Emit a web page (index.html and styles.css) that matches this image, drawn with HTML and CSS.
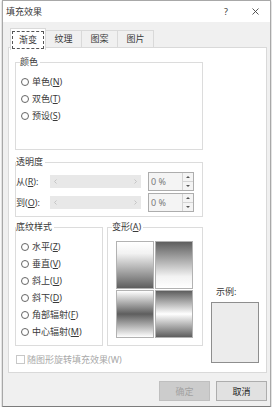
FILE: index.html
```html
<!DOCTYPE html>
<html lang="zh-CN">
<head>
    <meta charset="UTF-8">
    <meta name="viewport" content="width=device-width, initial-scale=1.0">
    <title>填充效果</title>
    <link rel="stylesheet" href="styles.css">
</head>
<body>
    <div class="dialog">
        <div class="titlebar">
            <span class="title">填充效果</span>
            <span class="title-help">?</span>
            <svg class="title-close" width="7" height="7" viewBox="0 0 7 7">
                <path d="M0.5 0.5L6.5 6.5M6.5 0.5L0.5 6.5" stroke="#444" stroke-width="0.9" fill="none"/>
            </svg>
        </div>

        <div class="dialog-body">
            <div class="tabs">
                <div class="tab active"><span class="tab-focus">渐变</span></div>
                <div class="tab">纹理</div>
                <div class="tab">图案</div>
                <div class="tab">图片</div>
            </div>

            <div class="panel">
                <div class="panel-left">
                    <fieldset class="group group-color">
                        <legend>颜色</legend>
                        <label class="radio"><span class="radio-dot"></span><span>单色(<u>N</u>)</span></label>
                        <label class="radio"><span class="radio-dot"></span><span>双色(<u>T</u>)</span></label>
                        <label class="radio"><span class="radio-dot"></span><span>预设(<u>S</u>)</span></label>
                    </fieldset>

                    <fieldset class="group group-alpha">
                        <legend>透明度</legend>
                        <div class="alpha-row">
                            <span class="alpha-label">从(<u>R</u>):</span>
                            <div class="slider">
                                <svg width="3" height="5" viewBox="0 0 3 5"><path d="M2.5 0.5L0.5 2.5L2.5 4.5" stroke="#c4c4c4" fill="none"/></svg>
                                <svg width="3" height="5" viewBox="0 0 3 5"><path d="M0.5 0.5L2.5 2.5L0.5 4.5" stroke="#c4c4c4" fill="none"/></svg>
                            </div>
                            <div class="spin">
                                <span class="spin-value">0 %</span>
                                <div class="spin-btns"><span class="spin-up"></span><span class="spin-down"></span></div>
                            </div>
                        </div>
                        <div class="alpha-row">
                            <span class="alpha-label">到(<u>O</u>):</span>
                            <div class="slider">
                                <svg width="3" height="5" viewBox="0 0 3 5"><path d="M2.5 0.5L0.5 2.5L2.5 4.5" stroke="#c4c4c4" fill="none"/></svg>
                                <svg width="3" height="5" viewBox="0 0 3 5"><path d="M0.5 0.5L2.5 2.5L0.5 4.5" stroke="#c4c4c4" fill="none"/></svg>
                            </div>
                            <div class="spin">
                                <span class="spin-value">0 %</span>
                                <div class="spin-btns"><span class="spin-up"></span><span class="spin-down"></span></div>
                            </div>
                        </div>
                    </fieldset>

                    <div class="group-pair">
                        <fieldset class="group group-style">
                            <legend>底纹样式</legend>
                            <label class="radio"><span class="radio-dot"></span><span>水平(<u>Z</u>)</span></label>
                            <label class="radio"><span class="radio-dot"></span><span>垂直(<u>V</u>)</span></label>
                            <label class="radio"><span class="radio-dot"></span><span>斜上(<u>U</u>)</span></label>
                            <label class="radio"><span class="radio-dot"></span><span>斜下(<u>D</u>)</span></label>
                            <label class="radio"><span class="radio-dot"></span><span>角部辐射(<u>F</u>)</span></label>
                            <label class="radio"><span class="radio-dot"></span><span>中心辐射(<u>M</u>)</span></label>
                        </fieldset>

                        <fieldset class="group group-variant">
                            <legend>变形(<u>A</u>)</legend>
                            <div class="swatches">
                                <span class="swatch swatch-down"></span>
                                <span class="swatch swatch-up"></span>
                                <span class="swatch swatch-mid-dark"></span>
                                <span class="swatch swatch-mid-light"></span>
                            </div>
                        </fieldset>
                    </div>

                    <label class="check"><span class="check-box"></span><span>随图形旋转填充效果(W)</span></label>
                </div>

                <div class="panel-right">
                    <div class="sample-label">示例:</div>
                    <div class="sample-box"></div>
                </div>
            </div>

            <div class="buttons">
                <button class="btn btn-disabled">确定</button>
                <button class="btn">取消</button>
            </div>
        </div>
    </div>
</body>
</html>
```

FILE: styles.css
```css
* {
    margin: 0;
    padding: 0;
    box-sizing: border-box;
}

body {
    font-family: "Noto Sans", "Noto Sans CJK SC", sans-serif;
    font-size: 9px;
    color: #3a3a3a;
    background: #fff;
}

u {
    text-decoration-thickness: 1px;
    text-underline-offset: 1px;
}

.dialog {
    margin-left: 2px;
    width: 269px;
    background: #f0f0f0;
    border: 1px solid #a8a8a8;
    border-bottom-color: #7c7c7c;
    box-shadow: 0 1px 2px rgba(0, 0, 0, 0.35);
}

.titlebar {
    height: 21px;
    background: #fff;
    display: flex;
    align-items: center;
    padding: 0 11px 0 3px;
    line-height: 12px;
}

.title {
    flex: 1;
}

.title-help {
    margin-right: 24px;
}

.dialog-body {
    padding: 6px 3px 5px 5px;
}

/* tabs */
.tabs {
    display: flex;
    align-items: flex-end;
    margin-left: 2px;
}

.tab {
    width: 37px;
    height: 17px;
    margin-left: -1px;
    border: 1px solid #d9d9d9;
    border-bottom: none;
    display: flex;
    align-items: center;
    justify-content: center;
    line-height: 12px;
}

.tab:first-child {
    margin-left: 0;
}

.tab.active {
    width: 36px;
    height: 22px;
    margin-bottom: -3px;
    padding: 2px 1px 1px 1px;
    background: #fff;
    position: relative;
    z-index: 1;
}

.tab-focus {
    flex: 1;
    align-self: stretch;
    border: 1px dashed #555;
    display: flex;
    align-items: center;
    justify-content: center;
}

/* panel */
.panel {
    background: #fff;
    border: 1px solid #d9d9d9;
    display: grid;
    grid-template-columns: 188px 1fr;
    column-gap: 4px;
    padding: 8px 0 8px 6px;
}

.group {
    border: 1px solid #dcdcdc;
    padding: 5px;
    min-width: 0;
}

.group legend {
    margin-left: -5px;
    padding: 0 2px 0 0;
    line-height: 12px;
}

.group-color {
    padding-bottom: 25px;
}

.group-color legend {
    margin-left: -1px;
}

.radio {
    display: flex;
    align-items: center;
    gap: 3px;
    height: 17px;
}

.radio-dot {
    width: 8px;
    height: 8px;
    border: 1px solid #666;
    border-radius: 50%;
}

/* transparency */
.group-alpha {
    margin-top: 6px;
    padding: 4px 8px 4px 0;
}

.group-alpha legend {
    margin-left: 0;
}

.alpha-row {
    display: flex;
    align-items: center;
    height: 19px;
}

.alpha-row + .alpha-row {
    margin-top: 2px;
}

.alpha-label {
    width: 34px;
}

.slider {
    width: 91px;
    height: 13px;
    background: #e8e8e8;
    display: flex;
    align-items: center;
    justify-content: space-between;
    padding: 0 4px;
}

.spin {
    margin-left: 7px;
    width: 46px;
    height: 19px;
    border: 1px solid #adadad;
    background: #f4f4f4;
    display: flex;
}

.spin-value {
    flex: 1;
    padding-left: 2px;
    line-height: 17px;
    color: #7a7a7a;
}

.spin-btns {
    width: 11px;
    border-left: 1px solid #d4d4d4;
    display: flex;
    flex-direction: column;
}

.spin-btns span {
    flex: 1;
    display: flex;
    align-items: center;
    justify-content: center;
}

.spin-up {
    border-bottom: 1px solid #d4d4d4;
}

.spin-up::before {
    content: '';
    border-left: 2px solid transparent;
    border-right: 2px solid transparent;
    border-bottom: 2px solid #555;
}

.spin-down::before {
    content: '';
    border-left: 2px solid transparent;
    border-right: 2px solid transparent;
    border-top: 2px solid #555;
}

/* shading styles + variants */
.group-pair {
    display: grid;
    grid-template-columns: 88px 96px;
    column-gap: 4px;
    margin-top: 4px;
}

.group-style {
    padding: 5px 0 5px 5px;
}

.group-variant {
    padding: 8px 0 0 8px;
}

.group-variant legend {
    margin-left: -4px;
}

.swatches {
    display: grid;
    grid-template-columns: 38px 38px;
    grid-template-rows: 48px 48px;
    gap: 1px;
}

.swatch {
    border: 1px solid #b2b2b2;
}

.swatch-down {
    background: linear-gradient(to bottom, #fff 0%, #f2f2f2 25%, #5e5e5e 100%);
}

.swatch-up {
    background: linear-gradient(to bottom, #5e5e5e 0%, #f2f2f2 75%, #fff 100%);
}

.swatch-mid-dark {
    background: linear-gradient(to bottom, #fff 0%, #5e5e5e 50%, #fff 100%);
}

.swatch-mid-light {
    background: linear-gradient(to bottom, #5e5e5e 0%, #fff 50%, #5e5e5e 100%);
}

.check {
    display: flex;
    align-items: center;
    gap: 2px;
    height: 10px;
    margin: 8px 0 0 1px;
    color: #a8a8a8;
}

.check-box {
    width: 9px;
    height: 9px;
    border: 1px solid #c8c8c8;
    background: #fff;
}

/* sample */
.panel-right {
    display: flex;
    flex-direction: column;
    justify-content: flex-end;
    padding: 0 0 1px 4px;
}

.sample-label {
    padding-left: 5px;
    margin-bottom: 4px;
    line-height: 12px;
}

.sample-box {
    width: 48px;
    height: 61px;
    border: 1px solid #8e8e8e;
    background: #ececec;
}

/* buttons */
.buttons {
    display: flex;
    justify-content: flex-end;
    gap: 6px;
    margin-top: 8px;
}

.btn {
    width: 51px;
    height: 20px;
    font: inherit;
    color: #222;
    background: #e1e1e1;
    border: 1px solid #adadad;
}

.btn-disabled {
    color: #a2a2a2;
    background: #ccc;
    border-color: #bfbfbf;
}
```
